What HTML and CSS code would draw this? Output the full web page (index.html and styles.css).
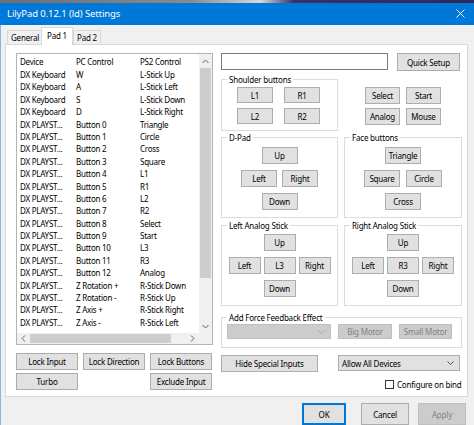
FILE: index.html
```html
<!DOCTYPE html>
<html>
<head>
<meta charset="utf-8">
<link rel="stylesheet" href="styles.css">
</head>
<body>
<div class="app">
  <div class="topstrip"></div>
  <div class="titlebar">
    <span class="title">LilyPad 0.12.1 (ld) Settings</span>
    <svg class="close" width="9" height="9" viewBox="0 0 9 9"><path d="M0.5 0.5 L8.5 8.5 M8.5 0.5 L0.5 8.5" stroke="#fff" stroke-width="1"/></svg>
  </div>
  <div class="client">
    <div class="tabs">
      <div class="tab">General</div>
      <div class="tab active">Pad 1</div>
      <div class="tab">Pad 2</div>
    </div>
    <div class="panel">
      <div class="leftcol">
        <div class="listbox">
          <div class="listcontent">
            <div class="lrow lhead"><span>Device</span><span>PC Control</span><span>PS2 Control</span></div>
            <div class="lrow"><span>DX Keyboard</span><span>W</span><span>L-Stick Up</span></div>
            <div class="lrow"><span>DX Keyboard</span><span>A</span><span>L-Stick Left</span></div>
            <div class="lrow"><span>DX Keyboard</span><span>S</span><span>L-Stick Down</span></div>
            <div class="lrow"><span>DX Keyboard</span><span>D</span><span>L-Stick Right</span></div>
            <div class="lrow"><span>DX PLAYST...</span><span>Button 0</span><span>Triangle</span></div>
            <div class="lrow"><span>DX PLAYST...</span><span>Button 1</span><span>Circle</span></div>
            <div class="lrow"><span>DX PLAYST...</span><span>Button 2</span><span>Cross</span></div>
            <div class="lrow"><span>DX PLAYST...</span><span>Button 3</span><span>Square</span></div>
            <div class="lrow"><span>DX PLAYST...</span><span>Button 4</span><span>L1</span></div>
            <div class="lrow"><span>DX PLAYST...</span><span>Button 5</span><span>R1</span></div>
            <div class="lrow"><span>DX PLAYST...</span><span>Button 6</span><span>L2</span></div>
            <div class="lrow"><span>DX PLAYST...</span><span>Button 7</span><span>R2</span></div>
            <div class="lrow"><span>DX PLAYST...</span><span>Button 8</span><span>Select</span></div>
            <div class="lrow"><span>DX PLAYST...</span><span>Button 9</span><span>Start</span></div>
            <div class="lrow"><span>DX PLAYST...</span><span>Button 10</span><span>L3</span></div>
            <div class="lrow"><span>DX PLAYST...</span><span>Button 11</span><span>R3</span></div>
            <div class="lrow"><span>DX PLAYST...</span><span>Button 12</span><span>Analog</span></div>
            <div class="lrow"><span>DX PLAYST...</span><span>Z Rotation +</span><span>R-Stick Down</span></div>
            <div class="lrow"><span>DX PLAYST...</span><span>Z Rotation -</span><span>R-Stick Up</span></div>
            <div class="lrow"><span>DX PLAYST...</span><span>Z Axis +</span><span>R-Stick Right</span></div>
            <div class="lrow"><span>DX PLAYST...</span><span>Z Axis -</span><span>R-Stick Left</span></div>
          </div>
          <div class="vscroll">
            <svg class="arrow" width="7" height="5" viewBox="0 0 7 5"><path d="M0.5 4 L3.5 1 L6.5 4" fill="none" stroke="#606060" stroke-width="1"/></svg>
            <div class="vthumb"></div>
            <svg class="arrow" width="7" height="5" viewBox="0 0 7 5"><path d="M0.5 1 L3.5 4 L6.5 1" fill="none" stroke="#606060" stroke-width="1"/></svg>
          </div>
          <div class="hscroll">
            <svg class="arrow" width="5" height="7" viewBox="0 0 5 7"><path d="M4 0.5 L1 3.5 L4 6.5" fill="none" stroke="#606060" stroke-width="1"/></svg>
            <div class="hthumb"></div>
            <svg class="arrow" width="5" height="7" viewBox="0 0 5 7"><path d="M1 0.5 L4 3.5 L1 6.5" fill="none" stroke="#606060" stroke-width="1"/></svg>
          </div>
          <div class="corner"></div>
        </div>
        <div class="lockgrid">
          <button class="btn">Lock Input</button>
          <button class="btn">Lock Direction</button>
          <button class="btn">Lock Buttons</button>
          <button class="btn">Turbo</button>
          <span></span>
          <button class="btn">Exclude Input</button>
        </div>
      </div>
      <div class="rightcol">
        <div class="rowa">
          <div class="textinput"></div>
          <button class="btn quick">Quick Setup</button>
        </div>
        <div class="rowb">
          <div class="group shoulder">
            <span class="glabel">Shoulder buttons</span>
            <div class="sgrid">
              <button class="btn">L1</button><button class="btn">R1</button>
              <button class="btn">L2</button><button class="btn">R2</button>
            </div>
          </div>
          <div class="sysgrid">
            <button class="btn">Select</button><button class="btn">Start</button>
            <button class="btn">Analog</button><button class="btn">Mouse</button>
          </div>
        </div>
        <div class="rowc">
          <div class="group pad">
            <span class="glabel">D-Pad</span>
            <div class="cross">
              <div class="crow"><button class="btn">Up</button></div>
              <div class="crow"><button class="btn">Left</button><button class="btn">Right</button></div>
              <div class="crow"><button class="btn">Down</button></div>
            </div>
          </div>
          <div class="group pad face">
            <span class="glabel">Face buttons</span>
            <div class="cross">
              <div class="crow"><button class="btn">Triangle</button></div>
              <div class="crow wide"><button class="btn">Square</button><button class="btn">Circle</button></div>
              <div class="crow"><button class="btn">Cross</button></div>
            </div>
          </div>
        </div>
        <div class="rowd">
          <div class="group pad stick">
            <span class="glabel">Left Analog Stick</span>
            <div class="cross">
              <div class="crow"><button class="btn">Up</button></div>
              <div class="crow"><button class="btn">Left</button><button class="btn">L3</button><button class="btn">Right</button></div>
              <div class="crow"><button class="btn">Down</button></div>
            </div>
          </div>
          <div class="group pad stick face">
            <span class="glabel">Right Analog Stick</span>
            <div class="cross">
              <div class="crow"><button class="btn">Up</button></div>
              <div class="crow"><button class="btn">Left</button><button class="btn">R3</button><button class="btn">Right</button></div>
              <div class="crow"><button class="btn">Down</button></div>
            </div>
          </div>
        </div>
        <div class="group ff">
          <span class="glabel">Add Force Feedback Effect</span>
          <div class="ffrow">
            <div class="combo disabled"><svg width="7" height="4" viewBox="0 0 7 4"><path d="M0.5 0.5 L3.5 3.5 L6.5 0.5" fill="none" stroke="#a8a8a8" stroke-width="1"/></svg></div>
            <button class="btn disabled big">Big Motor</button>
            <button class="btn disabled small">Small Motor</button>
          </div>
        </div>
        <div class="rowf">
          <button class="btn hide">Hide Special Inputs</button>
          <div class="combo devices"><span>Allow All Devices</span><svg width="7" height="4" viewBox="0 0 7 4"><path d="M0.5 0.5 L3.5 3.5 L6.5 0.5" fill="none" stroke="#505050" stroke-width="1"/></svg></div>
        </div>
        <div class="rowg">
          <span class="checkbox"></span>
          <span class="cblabel">Configure on bind</span>
        </div>
      </div>
    </div>
    <div class="footer">
      <button class="btn fbtn ok">OK</button>
      <button class="btn fbtn cancel">Cancel</button>
      <button class="btn fbtn disabled apply">Apply</button>
    </div>
  </div>
</div>
</body>
</html>
```

FILE: styles.css
```css
html, body {
  margin: 0;
  padding: 0;
}
body {
  width: 474px;
  height: 425px;
  overflow: hidden;
  font-family: "Noto Sans", "Open Sans", sans-serif;
  font-size: 8px;
  letter-spacing: -0.2px;
  color: #000;
  background: #f0f0f0;
}
.app {
  width: 474px;
  height: 425px;
  display: flex;
  flex-direction: column;
}
.topstrip {
  height: 3px;
  background: linear-gradient(to right, #6e6e70 0, #8a8a8c 40%, #d8d8d8 55%, #3a3260 62%, #2e2a58 100%);
}
.titlebar {
  height: 23px;
  background: #0078d7;
  display: flex;
  align-items: center;
  padding: 0 9px 0 7px;
}
.title {
  color: #fff;
  font-size: 9.5px;
  flex: 1;
  letter-spacing: -0.1px;
}
.close {
  display: block;
}
.client {
  flex: 1;
  border-left: 1px solid #8ab4e2;
  display: flex;
  flex-direction: column;
}
.tabs {
  height: 20px;
  margin: 0 6px 0 4px;
  border-bottom: 1px solid #d9d9d9;
  box-sizing: border-box;
  display: flex;
  align-items: flex-end;
  padding-left: 2px;
}
.tab {
  height: 14px;
  line-height: 13px;
  padding: 0 3px;
  border: 1px solid #d9d9d9;
  border-bottom: none;
  box-sizing: border-box;
  background: #f0f0f0;
  margin-right: -1px;
}
.tab.active {
  height: 18px;
  line-height: 15px;
  background: #fff;
  margin-bottom: -1px;
  padding: 0 5px;
  margin-left: -1px;
  margin-right: 0;
}
.panel {
  margin: 0 6px 0 4px;
  height: 352px;
  box-sizing: border-box;
  border: 1px solid #d9d9d9;
  border-top: none;
  background: #fff;
  padding: 8px 0 0 10px;
  display: flex;
  gap: 8px;
}
.leftcol {
  width: 197px;
  display: flex;
  flex-direction: column;
}
.listbox {
  height: 292px;
  box-sizing: border-box;
  border: 1px solid #b4b4b4;
  display: grid;
  grid-template-columns: 1fr 13px;
  grid-template-rows: 1fr 11px;
}
.listcontent {
  overflow: hidden;
}
.lrow {
  display: grid;
  grid-template-columns: 56px 64px 1fr;
  padding-left: 3px;
  height: 12.4px;
  line-height: 12.4px;
  white-space: nowrap;
  letter-spacing: -0.25px;
}
.lhead {
  height: 15px;
  line-height: 16px;
}
.vscroll {
  background: #f0f0f0;
  display: flex;
  flex-direction: column;
  align-items: center;
}
.vscroll .arrow:first-child {
  margin-top: 5px;
}
.vthumb {
  width: 11px;
  height: 210px;
  margin-top: 4px;
  background: #cdcdcd;
  flex: none;
}
.vscroll .arrow:last-child {
  margin-top: auto;
  margin-bottom: 4px;
}
.hscroll {
  background: #f0f0f0;
  display: flex;
  align-items: center;
  padding-left: 4px;
  padding-right: 4px;
}
.hthumb {
  width: 141px;
  height: 9px;
  margin-left: 4px;
  background: #cdcdcd;
}
.hscroll .arrow:last-child {
  margin-left: auto;
}
.corner {
  background: #f0f0f0;
}
.arrow {
  display: block;
}
.btn {
  font-family: inherit;
  font-size: 8px;
  letter-spacing: -0.2px;
  color: #000;
  background: #e1e1e1;
  border: 1px solid #adadad;
  padding: 0;
  margin: 0;
  box-sizing: border-box;
  white-space: nowrap;
  text-align: center;
}
.btn.disabled {
  background: #cccccc;
  border-color: #bfbfbf;
  color: #838383;
}
.lockgrid {
  margin-top: 8px;
  display: grid;
  grid-template-columns: 62px 62px 62px;
  grid-auto-rows: 17px;
  column-gap: 5px;
  row-gap: 3px;
}
.rightcol {
  width: 241px;
  display: flex;
  flex-direction: column;
}
.rowa {
  display: flex;
  gap: 9px;
  height: 18px;
}
.textinput {
  width: 167px;
  height: 17px;
  box-sizing: border-box;
  border: 1px solid #7a7a7a;
  background: #fff;
}
.quick {
  width: 63px;
  height: 18px;
}
.group {
  border: 1px solid #dcdcdc;
  box-sizing: border-box;
  display: flex;
  flex-direction: column;
}
.glabel {
  display: block;
  align-self: flex-start;
  margin: -6px 0 0 5px;
  padding: 0 2px;
  height: 11px;
  line-height: 11px;
  background: #fff;
  white-space: nowrap;
}
.rowb {
  margin-top: 8px;
  display: flex;
}
.shoulder {
  width: 117px;
  height: 52px;
}
.sgrid {
  margin: 2px 0 0 15px;
  display: grid;
  grid-template-columns: 36px 36px;
  grid-auto-rows: 16px;
  column-gap: 11px;
  row-gap: 5px;
}
.sysgrid {
  margin: 8px 0 0 27px;
  display: grid;
  grid-template-columns: 35px 35px;
  grid-auto-rows: 17px;
  column-gap: 6px;
  row-gap: 4px;
  align-self: flex-start;
}
.rowc, .rowd {
  display: flex;
  gap: 6px;
}
.rowc {
  margin-top: 6px;
}
.rowd {
  margin-top: 7px;
}
.pad {
  width: 117px;
  height: 81px;
}
.pad.face {
  width: 118px;
}
.cross {
  margin-top: 4px;
  display: flex;
  flex-direction: column;
  gap: 6px;
  align-items: center;
}
.crow {
  display: flex;
  gap: 5px;
  justify-content: center;
}
.crow.wide {
  gap: 6px;
}
.cross .btn {
  width: 36px;
  height: 17px;
}
.stick .cross {
  margin-top: 3px;
}
.stick .crow {
  gap: 3px;
}
.stick .cross .btn {
  width: 32px;
}
.ff {
  margin-top: 11px;
  height: 31px;
  width: 241px;
}
.ffrow {
  margin: 1px 0 0 5px;
  display: flex;
  gap: 7px;
}
.combo {
  box-sizing: border-box;
  border: 1px solid #adadad;
  background: #e1e1e1;
  display: flex;
  align-items: center;
  justify-content: space-between;
  padding: 0 5px 0 3px;
  white-space: nowrap;
}
.combo.disabled {
  width: 104px;
  height: 15px;
  background: #cccccc;
  border-color: #bfbfbf;
  justify-content: flex-end;
}
.big {
  width: 54px;
  height: 15px;
}
.small {
  width: 53px;
  height: 15px;
}
.rowf {
  margin-top: 7px;
  display: flex;
  gap: 20px;
}
.hide {
  width: 97px;
  height: 17px;
}
.devices {
  width: 122px;
  height: 16px;
}
.rowg {
  margin-top: 7px;
  padding-left: 164px;
  display: flex;
  align-items: center;
  gap: 3px;
  height: 11px;
  white-space: nowrap;
}
.checkbox {
  flex: none;
  width: 9px;
  height: 9px;
  box-sizing: border-box;
  border: 1px solid #333;
  background: #fff;
}
.cblabel {
  flex: none;
}
.footer {
  flex: 1;
  display: flex;
  padding: 6px 0 0 301px;
}
.fbtn {
  height: 22px;
  width: 48px;
}
.ok {
  width: 44px;
  border: 2px solid #0078d7;
  margin-right: 15px;
}
.cancel {
  margin-right: 9px;
}
.apply {
  color: #a0a0a0;
}
```
